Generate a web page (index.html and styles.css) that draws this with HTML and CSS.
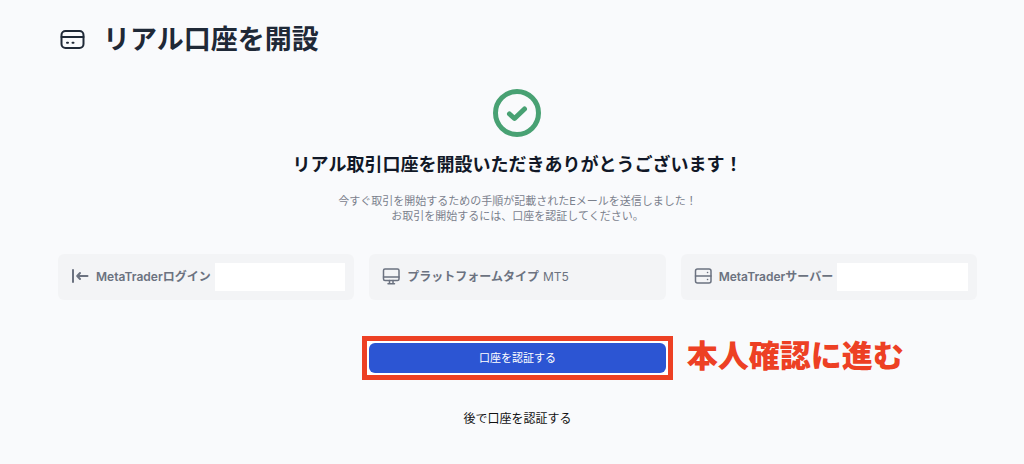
FILE: index.html
```html
<!DOCTYPE html>
<html lang="ja">
    <head>
        <meta charset="UTF-8" />
        <title>リアル口座を開設</title>
        <link rel="stylesheet" href="styles.css">
    </head>

    <body>
        <header class="page-header">
            <svg class="header-icon" viewBox="0 0 28 28">
                <rect x="3.500" y="5" width="22" height="17" rx="4" />
                <path d="M3.500 11h22M9 16.800h1M14.500 16.800h1" />
            </svg>
            <h1>リアル口座を開設</h1>
        </header>

        <main>
            <section class="thanks">
                <svg class="check-icon" viewBox="0 0 48 48">
                    <circle cx="24" cy="24" r="21.5" />
                    <path d="M16.500 25l5 4.500L31.500 20" />
                </svg>
                <h2>リアル取引口座を開設いただきありがとうございます！</h2>
                <p>
                    今すぐ取引を開始するための手順が記載されたEメールを送信しました！<br>
                    お取引を開始するには、口座を認証してください。
                </p>
            </section>

            <section class="account-row">
                <div class="card">
                    <svg class="card-icon login-icon" viewBox="0 0 18 18">
                        <path d="M2 2v12M16.500 8H6.500M9 5L6.200 8L9 11" />
                    </svg>
                    <b>MetaTraderログイン</b>
                    <span class="value-box"></span>
                </div>
                <div class="card">
                    <svg class="card-icon" viewBox="0 0 18 18">
                        <rect x="1.500" y="1" width="15.500" height="11.500" rx="1.500" />
                        <path d="M1.500 9h15.500M7.500 12.500v3M11 12.500v3M6 15.800h6.500" />
                    </svg>
                    <b>プラットフォームタイプ</b>
                    <span>MT5</span>
                </div>
                <div class="card">
                    <svg class="card-icon" viewBox="0 0 18 18">
                        <rect x="1.500" y="1" width="15.500" height="14" rx="2" />
                        <path d="M1.500 8h15.500M13.500 4.500h.1M13.500 11.500h.1" />
                    </svg>
                    <b>MetaTraderサーバー</b>
                    <span class="value-box"></span>
                </div>
            </section>

            <section class="action-row">
                <div class="highlight">
                    <button type="button" class="verify-button">口座を認証する</button>
                </div>
                <strong class="note">本人確認に進む</strong>
            </section>

            <a href="#" class="later-link">後で口座を認証する</a>
        </main>
    </body>
</html>
```

FILE: styles.css
```css
* {
    margin: 0;
    padding: 0;
    box-sizing: border-box;
}

body {
    padding: 21px 47px 32px 58px;
    background-color: #f9fafc;
    color: #111827;
    font-family: Inter, "Noto Sans CJK JP", sans-serif;
}

svg {
    flex: none;
    fill: none;
    stroke: currentColor;
    stroke-width: 2;
    stroke-linecap: round;
    stroke-linejoin: round;
}

.page-header {
    display: flex;
    align-items: center;
    gap: 17px;
    color: #1f2937;
}

.header-icon {
    width: 28px;
    height: 28px;
}

h1 {
    font-size: 27px;
    line-height: 38px;
}

main {
    display: flex;
    flex-direction: column;
    align-items: center;
}

.thanks {
    display: flex;
    flex-direction: column;
    align-items: center;
    margin-top: 30px;
    text-align: center;
}

.check-icon {
    width: 48px;
    height: 48px;
    color: #48a173;
    stroke-width: 5;
}

h2 {
    margin-top: 16px;
    font-size: 18px;
    line-height: 24px;
}

.thanks p {
    margin-top: 17px;
    color: #7b818d;
    font-size: 11px;
    line-height: 15px;
}

/* the cards and the button share the same three columns */
.account-row,
.action-row {
    display: grid;
    grid-template-columns: repeat(3, minmax(0, 1fr));
    column-gap: 15px;
    align-items: center;
    width: 100%;
}

.account-row {
    margin-top: 30px;
}

.card {
    display: flex;
    align-items: center;
    height: 46px;
    padding: 9px 9px 9px 13px;
    border-radius: 6px;
    background-color: #f3f4f6;
    color: #6b7280;
    font-size: 12px;
    line-height: 18px;
    white-space: nowrap;
}

.card-icon {
    width: 18px;
    height: 18px;
    margin-right: 7px;
    stroke-width: 1.5;
}

.login-icon {
    stroke-width: 2;
}

.card b {
    margin-right: 4px;
    font-weight: 600;
}

.value-box {
    flex: 1;
    align-self: stretch;
    background-color: #fff;
}

.action-row {
    margin-top: 36px;
}

.highlight {
    grid-column: 2;
    margin: 0 -7px;
    padding: 2px;
    border: 5px solid #ed4024;
    background-color: #fff;
}

.verify-button {
    display: block;
    width: 100%;
    height: 30px;
    padding-bottom: 2px;
    border: none;
    border-radius: 6px;
    background-color: #2c55d3;
    color: #fff;
    font-family: inherit;
    font-size: 11px;
    cursor: pointer;
}

.note {
    margin-left: 6px;
    padding-bottom: 4px;
    color: #ed4024;
    font-size: 31px;
    font-weight: 900;
    line-height: 40px;
    white-space: nowrap;
}

.later-link {
    margin-top: 30px;
    color: #111;
    font-size: 12px;
    line-height: 18px;
    text-decoration: none;
}
```
